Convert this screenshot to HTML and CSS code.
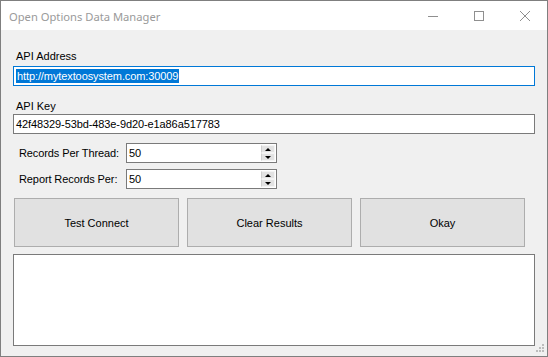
FILE: index.html
```html
<!DOCTYPE html>
<html lang="en">
<head>
    <meta charset="UTF-8">
    <meta name="viewport" content="width=device-width, initial-scale=1.0">
    <title>Open Options Data Manager</title>
    <link rel="stylesheet" href="styles.css">
</head>
<body>
    <div class="window">
        <div class="titleBar">
            <span class="titleText">Open Options Data Manager</span>
            <div class="titleButtons">
                <svg class="capBtn" width="12" height="12" viewBox="0 0 12 12"><line x1="1" y1="6.5" x2="11" y2="6.5" stroke="#8f8f8f" stroke-width="1"/></svg>
                <svg class="capBtn" width="12" height="12" viewBox="0 0 12 12"><rect x="1.5" y="1.5" width="9" height="9" fill="none" stroke="#8f8f8f" stroke-width="1"/></svg>
                <svg class="capBtn" width="12" height="12" viewBox="0 0 12 12"><path d="M1 1 L11 11 M11 1 L1 11" stroke="#8f8f8f" stroke-width="1"/></svg>
            </div>
        </div>
        <div class="client">
            <div class="label">API Address</div>
            <div class="textBox focused"><span class="selected">http://mytextoosystem.com:30009</span></div>
            <div class="label labelKey">API Key</div>
            <div class="textBox">42f48329-53bd-483e-9d20-e1a86a517783</div>

            <div class="spinRow first">
                <span class="spinLabel">Records Per Thread:</span>
                <div class="spinBox">
                    <span class="spinValue">50</span>
                    <div class="spinBtns">
                        <div class="spinBtn"><span class="arrowUp"></span></div>
                        <div class="spinBtn"><span class="arrowDown"></span></div>
                    </div>
                </div>
            </div>
            <div class="spinRow">
                <span class="spinLabel">Report Records Per:</span>
                <div class="spinBox">
                    <span class="spinValue">50</span>
                    <div class="spinBtns">
                        <div class="spinBtn"><span class="arrowUp"></span></div>
                        <div class="spinBtn"><span class="arrowDown"></span></div>
                    </div>
                </div>
            </div>

            <div class="buttonRow">
                <button class="btn">Test Connect</button>
                <button class="btn">Clear Results</button>
                <button class="btn">Okay</button>
            </div>

            <div class="results"></div>
        </div>
        <svg class="sizeGrip" width="10" height="10" viewBox="0 0 10 10">
            <rect x="6" y="0" width="2" height="2" fill="#bcbcbc"/>
            <rect x="3" y="3" width="2" height="2" fill="#bcbcbc"/>
            <rect x="6" y="3" width="2" height="2" fill="#bcbcbc"/>
            <rect x="0" y="6" width="2" height="2" fill="#bcbcbc"/>
            <rect x="3" y="6" width="2" height="2" fill="#bcbcbc"/>
            <rect x="6" y="6" width="2" height="2" fill="#bcbcbc"/>
        </svg>
    </div>
</body>
</html>
```

FILE: styles.css
```css
*
{
    box-sizing: border-box;
}
body
{
    margin: 0px;
    background-color: #ffffff;
}
.window
{
    position: relative;
    width: 548px;
    height: 357px;
    border: 1px solid #7f7f7f;
    background-color: #f0f0f0;
    font-family: "Liberation Sans", Arial, sans-serif;
    font-size: 11px;
    color: #000000;
}
.titleBar
{
    height: 29px;
    background-color: #ffffff;
    display: flex;
    align-items: center;
    justify-content: space-between;
}
.titleText
{
    margin-left: 8px;
    margin-top: 1px;
    font-family: "Noto Sans", "Open Sans", sans-serif;
    font-size: 11.2px;
    color: #9a9a9a;
}
.titleButtons
{
    display: flex;
    align-items: center;
    margin-right: 16px;
}
.capBtn
{
    display: block;
    margin-left: 34px;
}
.client
{
    padding: 20px 12px 0px 12px;
    display: flex;
    flex-direction: column;
}
.label
{
    height: 13px;
    line-height: 13px;
    padding-left: 3px;
}
.labelKey
{
    margin-top: 14px;
    margin-bottom: -2px;
}
.textBox
{
    margin-top: 3px;
    height: 20px;
    border: 1px solid #7a7a7a;
    background-color: #ffffff;
    padding-left: 2px;
    line-height: 18px;
    white-space: nowrap;
    overflow: hidden;
    letter-spacing: -0.1px;
}
.textBox.focused
{
    border-color: #0078d7;
}
.selected
{
    background-color: #0078d7;
    color: #ffffff;
    padding: 1px 1px;
}
.spinRow
{
    display: flex;
    align-items: center;
    margin-top: 6px;
    height: 20px;
}
.spinRow.first
{
    margin-top: 9px;
}
.spinLabel
{
    width: 113px;
    padding-left: 6px;
    letter-spacing: -0.1px;
}
.spinBox
{
    width: 151px;
    height: 20px;
    border: 1px solid #7a7a7a;
    background-color: #ffffff;
    display: flex;
    justify-content: space-between;
}
.spinValue
{
    padding-left: 2px;
    line-height: 18px;
}
.spinBtns
{
    width: 15px;
    display: flex;
    flex-direction: column;
    padding: 1px 1px 1px 0px;
}
.spinBtn
{
    flex: 1;
    background-color: #e3e3e3;
    border: 1px solid #f4f4f4;
    border-left-color: #cfcfcf;
    display: flex;
    align-items: center;
    justify-content: center;
}
.arrowUp
{
    width: 0;
    height: 0;
    border-left: 3px solid transparent;
    border-right: 3px solid transparent;
    border-bottom: 3px solid #000000;
}
.arrowDown
{
    width: 0;
    height: 0;
    border-left: 3px solid transparent;
    border-right: 3px solid transparent;
    border-top: 3px solid #000000;
}
.buttonRow
{
    display: flex;
    gap: 8px;
    margin-top: 9px;
    padding-left: 1px;
}
.btn
{
    width: 165px;
    height: 49px;
    border: 1px solid #adadad;
    background-color: #e1e1e1;
    font-family: "Liberation Sans", Arial, sans-serif;
    font-size: 11px;
    color: #000000;
    padding: 0px;
}
.results
{
    margin-top: 7px;
    height: 92px;
    border: 1px solid #7a7a7a;
    background-color: #ffffff;
}
.sizeGrip
{
    position: absolute;
    right: 1px;
    bottom: 2px;
}
```
